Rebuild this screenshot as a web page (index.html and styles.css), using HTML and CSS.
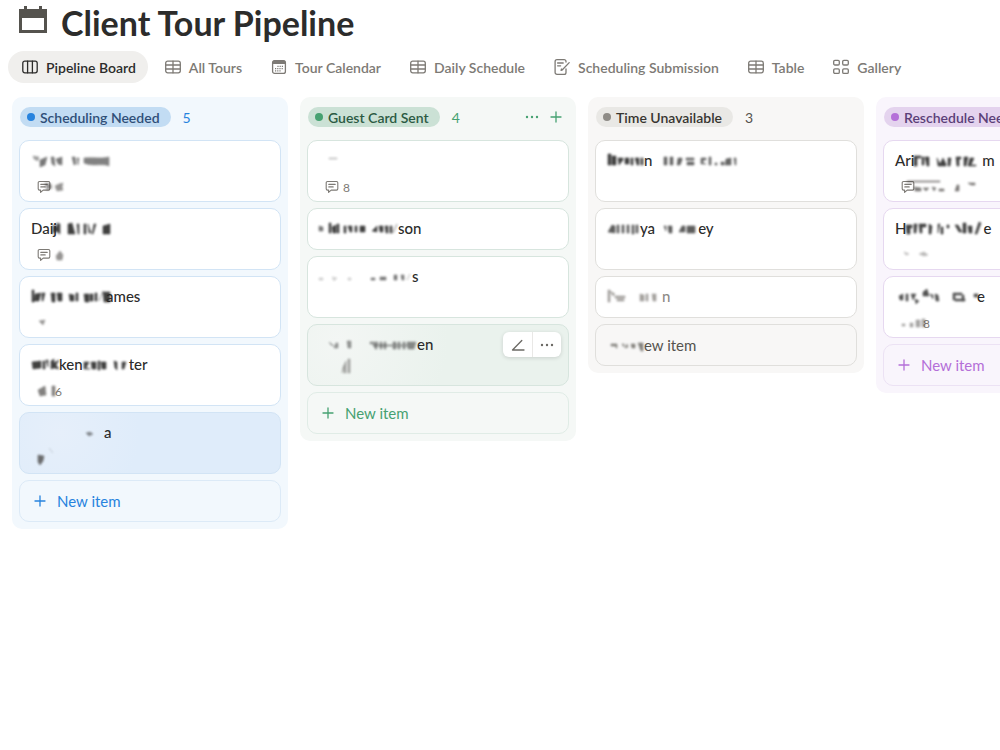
FILE: index.html
```html
<!DOCTYPE html>
<html lang="en">
<head>
  <meta charset="UTF-8" />
  <meta name="viewport" content="width=device-width, initial-scale=1.0" />
  <title>Client Tour Pipeline</title>
  <link rel="stylesheet" href="styles.css">
</head>
<body>

  <!-- Shared icons -->
  <svg class="sprite" aria-hidden="true">
    <symbol id="icon-table" viewBox="0 0 16 16">
      <rect x="0.7" y="2.2" width="14.6" height="11.6" rx="2" />
      <path d="M.7 6h14.6M.7 10h14.6M8 2.2v11.6" />
    </symbol>
    <symbol id="icon-comment" viewBox="0 0 14 14">
      <path d="M2.5 1.5h9a1.3 1.3 0 0 1 1.3 1.3v6a1.3 1.3 0 0 1-1.3 1.3H6.2L3.6 12.4v-2.3H2.5a1.3 1.3 0 0 1-1.3-1.3v-6a1.3 1.3 0 0 1 1.3-1.3z" />
      <path d="M3.8 4.4h6.4M3.8 6.9h4.4" />
    </symbol>
    <symbol id="icon-plus" viewBox="0 0 12 12">
      <path d="M6 1v10M1 6h10" />
    </symbol>
    <symbol id="icon-dots" viewBox="0 0 14 14">
      <circle cx="2" cy="7" r="1.2" /><circle cx="7" cy="7" r="1.2" /><circle cx="12" cy="7" r="1.2" />
    </symbol>
  </svg>

  <header class="page-header">
    <svg class="page-icon" viewBox="0 0 28 28" aria-hidden="true">
      <path fill-rule="evenodd" d="M0 3h5V0h3v3h12V0h3v3h5v24H0zM3 12v12h22V12z" />
    </svg>
    <h1>Client Tour Pipeline</h1>
  </header>

  <nav class="tabs">
    <button class="tab active">
      <svg class="icon" viewBox="0 0 16 16"><rect x="0.8" y="2.2" width="14.4" height="11.6" rx="2" /><path d="M5.6 2.2v11.6M10.4 2.2v11.6" /></svg>
      Pipeline Board
    </button>
    <button class="tab"><svg class="icon"><use href="#icon-table" /></svg>All Tours</button>
    <button class="tab">
      <svg class="icon" viewBox="0 0 16 16">
        <rect x="1.6" y="1.6" width="12.8" height="12.8" rx="2" />
        <path class="solid" d="M1.6 5V3.2a2 2 0 0 1 2-2h8.8a2 2 0 0 1 2 2V5z" />
        <path class="dots" d="M6.4 7.4h5.6M4 9.6h8M4 11.8h5.6" />
      </svg>
      Tour Calendar
    </button>
    <button class="tab"><svg class="icon"><use href="#icon-table" /></svg>Daily Schedule</button>
    <button class="tab">
      <svg class="icon" viewBox="0 0 16 16">
        <path d="M12 3V2.6A1.9 1.9 0 0 0 10.1.7H3A1.9 1.9 0 0 0 1.1 2.6v10.8A1.9 1.9 0 0 0 3 15.3h7.1a1.9 1.9 0 0 0 1.9-1.9V10" />
        <path d="M3.6 4h5.6M3.6 6.8h3M15.2 3.6l-6.8 7.2-1.3.6.4-1.4" />
      </svg>
      Scheduling Submission
    </button>
    <button class="tab"><svg class="icon"><use href="#icon-table" /></svg>Table</button>
    <button class="tab">
      <svg class="icon" viewBox="0 0 16 16"><rect x="0.7" y="1.4" width="5.6" height="4.6" rx="1.2" /><rect x="9.7" y="1.4" width="5.6" height="4.6" rx="1.2" /><rect x="0.7" y="9.8" width="5.6" height="4.6" rx="1.2" /><rect x="9.7" y="9.8" width="5.6" height="4.6" rx="1.2" /></svg>
      Gallery
    </button>
  </nav>

  <main class="board">

    <section class="column blue">
      <div class="column-header">
        <h2 class="tag">Scheduling Needed</h2>
        <span class="count">5</span>
      </div>
      <article class="card">
        <div class="name">
          <svg class="smudge" width="80" height="20"><path opacity=".5" d="M2 6l6 1-1 4-4-2z" /><path opacity=".7" d="M9 10l7-3-2 8-5 2zM20 7l3 0 1 9-3-2zM25 9l6-2v8l-4-1zM41 7l3 0 1 7-2 1zM46 8h2l-1 7z" /><path opacity=".65" d="M53 8c8-1 17 1 25-1v9c-6-3-17 1-25-3z" /></svg>
        </div>
        <div class="meta"><svg class="icon"><use href="#icon-comment" /></svg><svg class="smudge" width="8" height="14"><path opacity=".6" d="M-10 3l6 1 1 4-5 2zM0 6l4-2 4-1-1 4 1 3-6 1z" /></svg></div>
      </article>
      <article class="card">
        <div class="name">Daij<svg class="smudge" width="58" height="20" viewBox="4 0 58 20"><path d="M0 7l4 2V5l3 1v10l-4-3-3 3zM15 6l4-1 3 11h-7zM24 6h2v10h-1zM31 6h2v10h-2zM35 6l3 9h-2zM41 6h2l-3 10h-1zM50 8l7-2v10h-7z" /></svg></div>
        <div class="meta"><svg class="icon"><use href="#icon-comment" /></svg><svg class="smudge" width="8" height="14"><path opacity=".6" d="M1 8l4-5 3 4-1 5H2z" /></svg></div>
      </article>
      <article class="card">
        <div class="name"><svg class="smudge" width="75" height="20"><path d="M1 4h2v12H1zM4 8l6-1-2 8H3zM11 7h3l-2 8h-1zM20 7h4v9h-3zM26 7h5v8h-4zM38 8l5 1v6h-4zM45 7h2v8h-2zM53 8h5v8h-4zM59 8h3v7h-3zM64 7h2v8h-2zM72 6h7v10h-6z" /><path class="thin" d="M68 15l4-10" /></svg>ames</div>
        <div class="meta"><svg class="smudge" width="12" height="14"><path opacity=".6" d="M2 5l6-1-2 5z" /></svg></div>
      </article>
      <article class="card">
        <div class="name"><svg class="smudge" width="28" height="20"><path d="M1 8l9-1v7l-8 1zM12 7h2v8h-2zM15 6h2v7zM20 7l3-2v4l5-3-3 5 3 4-5-1-3 1z" /></svg>ken<svg class="smudge" width="46" height="20"><path d="M1 8h5l-3 6 4 1H1zM8 8h5v7h-4zM15 7h2v9h-2zM18 8h5v7h-4zM31 7l3 1v8l-2-2zM39 8h4l-2 7h-2z" /></svg>ter</div>
        <div class="meta"><svg class="smudge" width="20" height="14"><path opacity=".7" d="M1 6l7-4 1 9-6 1zM15 2h3v10h-3z" /></svg><span>6</span></div>
      </article>
      <article class="card selected">
        <div class="name"><svg class="smudge" width="73" height="20"><path opacity=".6" d="M55 11l4-1 3 2-4 2z" /></svg>a</div>
        <div class="meta"><svg class="smudge" width="20" height="14"><path opacity=".8" d="M1 3l6 1-1 5-3 4-2-3z" /><path class="thin" opacity=".4" d="M12 -4l4 5" /></svg></div>
      </article>
      <button class="new-item"><svg class="icon"><use href="#icon-plus" /></svg>New item</button>
    </section>

    <section class="column green">
      <div class="column-header">
        <h2 class="tag">Guest Card Sent</h2>
        <span class="count">4</span>
        <div class="column-actions">
          <button aria-label="More options"><svg class="icon dots-icon"><use href="#icon-dots" /></svg></button>
          <button aria-label="Add item"><svg class="icon"><use href="#icon-plus" /></svg></button>
        </div>
      </div>
      <article class="card">
        <div class="name"><svg class="smudge" width="40" height="20"><path opacity=".35" d="M10 8h8v1h-8z" /></svg></div>
        <div class="meta"><svg class="icon"><use href="#icon-comment" /></svg><span>8</span></div>
      </article>
      <article class="card">
        <div class="name"><svg class="smudge" width="79" height="20"><path opacity=".7" d="M0 8l4 1v4H0z" /><path d="M10 5h2v10h-2zM13 9l4-2v8h-3zM18 6h2v9h-2zM25 8h2v7h-2zM29 8h4v6h-2zM36 8h2v6h-2zM41 8h5v6h-5zM53 13l5-5v6zM60 8h4v6h-3zM66 8h3v7h-2zM71 8h2v7h-2z" /><path class="thin" d="M74 15l4-9" /></svg>son</div>
      </article>
      <article class="card">
        <div class="name"><svg class="smudge" width="93" height="20"><path opacity=".25" d="M0 12h4v2H0zM13 11l5 1-3 3zM29 12h3v2h-3z" /><path opacity=".7" d="M52 12h4v2h-4zM61 11l6 0v3h-6zM75 9h3v5h-3zM82 9h3v5h-2z" /><path class="thin" opacity=".6" d="M88 14l3-6" /></svg>s</div>
        <div class="meta"></div>
      </article>
      <article class="card selected">
        <div class="name"><svg class="smudge" width="98" height="20"><path opacity=".55" d="M10 8l5 4-3-1zM17 9h2v5h-4zM28 7h4v7h-3zM51 8h8v2h-8zM55 9h3v6h-2zM61 8h2v7h-2zM65 8h2v7h-2z" /><path opacity=".6" d="M54 11h38v1H54zM74 8h3v7h-3zM79 8h2v7h-2zM84 8h2v7h-2zM88 8h9l-2 7h-6z" /></svg>en</div>
        <div class="meta"><svg class="smudge" width="24" height="14"><path opacity=".5" d="M18 3l3-6v12h-2V4l-2 5zM23 -5h2V9h-2z" /></svg></div>
        <div class="card-actions">
          <button aria-label="Edit"><svg class="icon" viewBox="0 0 14 14"><path d="M1.5 12L10.8 2.5M1.5 12h11.5" /></svg></button>
          <button aria-label="More"><svg class="icon dots-icon"><use href="#icon-dots" /></svg></button>
        </div>
      </article>
      <button class="new-item"><svg class="icon"><use href="#icon-plus" /></svg>New item</button>
    </section>

    <section class="column gray">
      <div class="column-header">
        <h2 class="tag">Time Unavailable</h2>
        <span class="count">3</span>
      </div>
      <article class="card">
        <div class="name"><svg class="smudge" width="37" height="20"><path d="M1 4h3v11H1zM5 6h4v9H5zM11 8h5v2l-4 5zM18 8h4v6h-4zM24 8h2v7h-2zM28 8h4v7h-2zM34 8h2v7h-2z" /></svg>n<svg class="smudge" width="84" height="20"><path opacity=".8" d="M12 7h3v8h-3zM18 7h3v8h-3zM26 8h4v2l-2 5h-3zM34 8h8v2h-8zM35 12h7v3h-7zM49 8h5v2h-3v3l3 1h-5zM57 7h2v8h-2zM63 13h2v2h-2zM69 12h3v3h-3zM74 9l5-1v7h-6zM82 8h2v7h-1z" /></svg></div>
        <div class="meta"></div>
      </article>
      <article class="card">
        <div class="name"><svg class="smudge" width="33" height="20"><path opacity=".85" d="M1 14l4-7 3 1v7zM10 7h2v8h-2zM15 7h2v8h-2zM20 7h2v8h-2zM25 7h2v9h-2zM29 7h2v8h-2z" /></svg>ya<svg class="smudge" width="43" height="20"><path opacity=".85" d="M9 8h2v5zM13 8h4v7h-3zM24 14l3-6 3 0v6zM32 8h8v7h-8z" /></svg>ey</div>
        <div class="meta"></div>
      </article>
      <article class="card muted">
        <div class="name"><svg class="smudge" width="55" height="20"><path opacity=".9" d="M1 4h2v12H1zM3 5l5 3-2 2zM8 10h10v2H8zM10 13h7v2h-7zM33 8l4 1v6h-4zM39 8h2v7h-2zM45 8h4v7h-3z" /></svg>n</div>
      </article>
      <button class="new-item"><svg class="smudge" width="34" height="20"><path opacity=".8" d="M1 9l6 0v4H6v-2H1zM12 9h2v3zM15 13l2-4 1 3zM21 9h4v4h-3zM28 8h5v8h-2z" /></svg>ew item</button>
    </section>

    <section class="column purple">
      <div class="column-header">
        <h2 class="tag">Reschedule Needed</h2>
        <span class="count">3</span>
      </div>
      <article class="card">
        <div class="name">Ari<svg class="smudge" width="68" height="20"><path d="M0 6h7v2H3v8H0zM8 7h2v8H8zM11 7h4v9h-2zM23 8l3 6 3-6 3 6v2h-8zM34 8l3 0-1 8h-2zM42 7h5v2h-2v7h-2zM50 7h4l-2 9h-2zM56 8h4l-3 7h5v1h-8z" /></svg>m</div>
        <div class="meta"><svg class="icon"><use href="#icon-comment" /></svg><svg class="smudge" width="62" height="14"><path opacity=".75" d="M-12 1h33v1H-12zM-5 7l7 1v3H-4zM4 8l6 0-3 3zM13 7l4 1-2 3zM20 9h5v2h-5zM38 5h2v6h-4zM49 3h7v2h-4z" /></svg></div>
      </article>
      <article class="card">
        <div class="name">H<svg class="smudge" width="77" height="20"><path d="M0 7h6v3H4v6H1zM8 6h3l-1 9H8zM13 6h7v3h-4v6h-2zM23 6l3 2-1 8h-2zM32 6h2l-2 9zM35 9h2v7h-2zM41 7h2v3h-2zM49 7h3l4 7h-3zM57 5h3v10h-3zM62 8h4v7h-3zM73 4l2 1-4 11h-2z" /></svg>e</div>
        <div class="meta"><svg class="smudge" width="30" height="14"><path opacity=".4" d="M3 4l5 2-3 1zM18 6l5-2 4 3-4 1z" /></svg></div>
      </article>
      <article class="card">
        <div class="name"><svg class="smudge" width="82" height="20"><path opacity=".9" d="M4 10l4-2v6H5zM11 8h2v7h-2zM16 8h5l-3 6zM20 13l4 2-3 3zM28 6l4-3 2 7h-6zM35 8l3 1v4zM40 8l3 1 1 6h-3zM58 7h9v2h-7v5h-2zM67 9h2v6h-2zM60 13h10v2H60zM79 8h4v3h-4z" /></svg>e</div>
        <div class="meta"><svg class="smudge" width="24" height="14"><path opacity=".5" d="M1 8h3v2H1zM9 7l3 0v4H9zM15 4h4v7h-4zM21 3h3v8h-3z" /></svg><span>8</span></div>
      </article>
      <button class="new-item"><svg class="icon"><use href="#icon-plus" /></svg>New item</button>
    </section>

  </main>

</body>
</html>
```
FILE: styles.css
```css
* {
  box-sizing: border-box;
}
body {
  font-family: Lato, "Open Sans", sans-serif;
  background-color: #ffffff;
  margin: 0;
  color: #2c2c2b;
  overflow-x: hidden;
}
button {
  font-family: inherit;
  background: none;
  border: none;
  padding: 0;
  cursor: pointer;
}
.sprite {
  display: none;
}
.icon {
  width: 16px;
  height: 16px;
  flex: none;
  fill: none;
  stroke: currentColor;
  stroke-width: 1.3;
  stroke-linecap: round;
  stroke-linejoin: round;
}
.icon .solid {
  fill: currentColor;
  stroke: none;
}
.icon .dots {
  stroke-width: 1.2;
  stroke-linecap: butt;
  stroke-dasharray: 1.2 1;
}
.icon.dots-icon {
  fill: currentColor;
  stroke: none;
}

/* Header */
.page-header {
  display: flex;
  align-items: center;
  gap: 14px;
  padding: 2px 19px 0;
  height: 43px;
}
.page-icon {
  width: 28px;
  height: 28px;
  fill: #55534e;
  margin-bottom: 6px;
}
h1 {
  margin: 0;
  font-size: 34px;
  line-height: 40px;
  font-weight: bold;
}

/* Tabs */
.tabs {
  display: flex;
  gap: 3px;
  padding: 8px 8px 14px;
}
.tab {
  display: flex;
  align-items: center;
  flex: none;
  gap: 8px;
  height: 32px;
  padding: 0 12px 0 14px;
  border-radius: 16px;
  font-size: 14px;
  font-weight: 600;
  color: #7d7a75;
}
.tab.active {
  background-color: #f0efed;
  color: #2c2c2b;
}

/* Board */
.board {
  display: flex;
  align-items: flex-start;
  gap: 12px;
  padding: 0 12px;
  overflow-x: auto;
  scrollbar-width: none;
}
.column {
  display: flex;
  flex-direction: column;
  flex: none;
  gap: 6px;
  width: 276px;
  padding: 10px 7px 7px;
  border-radius: 10px;
  background-color: var(--column);
}
.column-header {
  display: flex;
  align-items: center;
  padding: 0 1px;
  height: 20px;
  margin-bottom: 7px;
}
.tag {
  display: flex;
  align-items: center;
  gap: 5px;
  margin: 0;
  height: 20px;
  padding: 0 11px 0 7px;
  border-radius: 10px;
  background-color: var(--tag);
  color: var(--tag-text);
  font-size: 14px;
  font-weight: 600;
  white-space: nowrap;
}
.tag::before {
  content: "";
  width: 8px;
  height: 8px;
  border-radius: 50%;
  background-color: var(--dot);
}
.count {
  margin-left: 12px;
  font-size: 14px;
  color: var(--accent);
}
.column-actions {
  display: flex;
  align-items: center;
  gap: 11px;
  margin-left: auto;
  padding-right: 6px;
}
.column-actions button {
  display: flex;
  color: var(--accent);
}
.column-actions .icon {
  width: 12px;
  height: 12px;
}
.column-actions .dots-icon {
  width: 14px;
  height: 14px;
}

/* Cards */
.card {
  position: relative;
  min-height: 42px;
  padding: 8px 11px 7px;
  border: 1px solid var(--line);
  border-radius: 10px;
  background-color: #ffffff;
}
.card.selected {
  background: var(--selected);
}
.name {
  display: flex;
  align-items: center;
  height: 22px;
  font-size: 15px;
  font-weight: 500;
}
.meta {
  display: flex;
  align-items: center;
  gap: 4px;
  height: 14px;
  margin-top: 9px;
  padding-left: 6px;
  font-size: 12px;
  color: #7d7a75;
}
.meta .icon {
  width: 14px;
  height: 14px;
  stroke-width: 1.1;
}
.meta .smudge + span {
  margin-left: -6px;
}
.muted .name {
  color: #8e8b86;
}
.smudge {
  flex: none;
  overflow: visible;
  fill: currentColor;
  stroke: currentColor;
  stroke-width: 0.6;
  opacity: 0.9;
  filter: blur(0.8px);
}
.smudge .thin {
  fill: none;
}
.meta .smudge {
  color: #3c3a37;
}
.card-actions {
  position: absolute;
  top: 7px;
  right: 7px;
  display: flex;
  border-radius: 6px;
  background-color: #ffffff;
  box-shadow: 0 1px 4px rgba(0, 0, 0, 0.14);
}
.card-actions button {
  display: flex;
  align-items: center;
  justify-content: center;
  width: 29px;
  height: 25px;
  color: #6b6964;
}
.card-actions button + button {
  border-left: 1px solid #e9e8e6;
}
.card-actions .icon {
  width: 14px;
  height: 14px;
}
.new-item {
  display: flex;
  align-items: center;
  gap: 11px;
  height: 42px;
  padding: 0 14px;
  border: 1px solid var(--new-line);
  border-radius: 10px;
  font-size: 15px;
  color: var(--accent);
}
.new-item .icon {
  width: 12px;
  height: 12px;
}
.new-item .smudge {
  margin-right: -11px;
}

/* Column colours */
.blue {
  --column: #f2f8fd;
  --tag: #c2dcf3;
  --tag-text: #2f4f78;
  --dot: #2783de;
  --accent: #2783de;
  --line: #d2e4f5;
  --new-line: #dceaf7;
  --selected: radial-gradient(circle at 40px 20px, #e6effa, #dfecfa 80px);
}
.green {
  --column: #f5f8f6;
  --tag: #cbe1d5;
  --tag-text: #2b5a43;
  --dot: #46a171;
  --accent: #46a171;
  --line: #d7e5de;
  --new-line: #e0ece6;
  --selected: radial-gradient(circle at 30px 16px, #f3f6f4, #eaf2ed 110px);
}
.gray {
  --column: #f8f7f6;
  --tag: #e9e8e5;
  --tag-text: #373530;
  --dot: #8e8b86;
  --accent: #55534e;
  --line: #e0dfdc;
  --new-line: #e0dfdc;
}
.purple {
  --column: #f9f5fc;
  --tag: #e4d3ee;
  --tag-text: #5b3f78;
  --dot: #b46fd8;
  --accent: #b46fd8;
  --line: #e6d8f0;
  --new-line: #ece2f4;
}
```
